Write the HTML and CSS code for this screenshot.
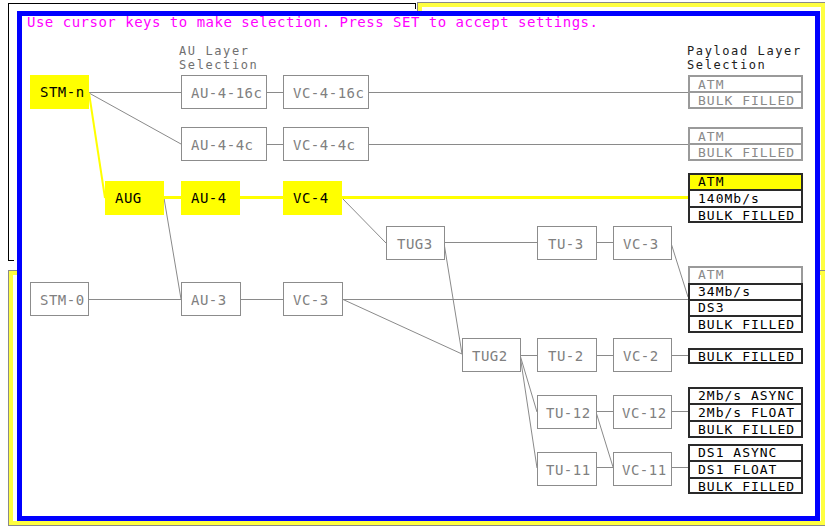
FILE: index.html
```html
<!DOCTYPE html>
<html lang="en">
<head>
<meta charset="utf-8">
<title>Payload Layer Selection</title>
<link rel="stylesheet" href="styles.css">
</head>
<body>
<div class="screen">
  <div class="bgwin bgwin-black"></div>
  <div class="bgwin bgwin-yellow-top"></div>
  <div class="bgwin bgwin-yellow-bottom"></div>

  <div class="dialog">
    <p class="hint">Use cursor keys to make selection. Press SET to accept settings.</p>

    <svg class="diagram" width="793" height="500" viewBox="22 16 793 500" xmlns="http://www.w3.org/2000/svg">
      <!-- column headings -->
      <text class="lbl lbl-au" x="179" y="55">AU Layer</text>
      <text class="lbl lbl-au" x="179" y="69">Selection</text>
      <text class="lbl lbl-pl" x="687" y="55">Payload Layer</text>
      <text class="lbl lbl-pl" x="687" y="69">Selection</text>

      <!-- gray connectors -->
      <g class="ln">
        <line x1="89" y1="92.5" x2="181" y2="92.5"/>
        <line x1="266" y1="92.5" x2="283" y2="92.5"/>
        <line x1="368" y1="92.5" x2="688" y2="92.5"/>
        <line x1="266" y1="144.5" x2="283" y2="144.5"/>
        <line x1="368" y1="144.5" x2="688" y2="144.5"/>
        <line x1="444" y1="242.5" x2="537" y2="242.5"/>
        <line x1="596" y1="242.5" x2="613" y2="242.5"/>
        <line x1="88" y1="299.5" x2="181" y2="299.5"/>
        <line x1="240" y1="299.5" x2="283" y2="299.5"/>
        <line x1="342" y1="299.5" x2="688" y2="299.5"/>
        <line x1="520" y1="355.5" x2="537" y2="355.5"/>
        <line x1="596" y1="355.5" x2="613" y2="355.5"/>
        <line x1="671" y1="355.5" x2="688" y2="355.5"/>
        <line x1="596" y1="411.5" x2="613" y2="411.5"/>
        <line x1="671" y1="411.5" x2="688" y2="411.5"/>
        <line x1="596" y1="467.5" x2="613" y2="467.5"/>
        <line x1="671" y1="467.5" x2="688" y2="467.5"/>

        <line x1="89" y1="93" x2="181" y2="144"/>
        <line x1="164" y1="198" x2="181" y2="299"/>
        <line x1="342" y1="198" x2="386" y2="243"/>
        <line x1="671" y1="243" x2="688" y2="297"/>
        <line x1="444" y1="243" x2="462" y2="354"/>
        <line x1="342" y1="299" x2="462" y2="354"/>
        <line x1="520" y1="355" x2="537" y2="412"/>
        <line x1="520" y1="355" x2="537" y2="468"/>
        <line x1="596" y1="412" x2="613" y2="467"/>
      </g>

      <!-- selected path -->
      <g class="ln-sel">
        <line class="ln-sel-diag" x1="89" y1="93" x2="105" y2="198"/>
        <line x1="164" y1="197.5" x2="181" y2="197.5"/>
        <line x1="240" y1="197.5" x2="283" y2="197.5"/>
        <line x1="342" y1="197.5" x2="688" y2="197.5"/>
      </g>

      <!-- selected nodes -->
      <g class="node sel"><rect x="30" y="75" width="59" height="34"/><text x="40" y="97">STM-n</text></g>
      <g class="node sel"><rect x="105" y="181" width="59" height="34"/><text x="115" y="203">AUG</text></g>
      <g class="node sel"><rect x="181" y="181" width="59" height="34"/><text x="191" y="203">AU-4</text></g>
      <g class="node sel"><rect x="283" y="181" width="59" height="34"/><text x="293" y="203">VC-4</text></g>

      <!-- unselected nodes -->
      <g class="node"><rect x="181.5" y="75.5" width="85" height="33"/><text x="191" y="98">AU-4-16c</text></g>
      <g class="node"><rect x="283.5" y="75.5" width="85" height="33"/><text x="293" y="98">VC-4-16c</text></g>
      <g class="node"><rect x="181.5" y="127.5" width="85" height="33"/><text x="191" y="150">AU-4-4c</text></g>
      <g class="node"><rect x="283.5" y="127.5" width="85" height="33"/><text x="293" y="150">VC-4-4c</text></g>
      <g class="node"><rect x="386.5" y="226.5" width="58" height="33"/><text x="397" y="249">TUG3</text></g>
      <g class="node"><rect x="537.5" y="226.5" width="59" height="33"/><text x="548" y="249">TU-3</text></g>
      <g class="node"><rect x="613.5" y="226.5" width="58" height="33"/><text x="623" y="249">VC-3</text></g>
      <g class="node"><rect x="30.5" y="282.5" width="58" height="33"/><text x="40" y="305">STM-0</text></g>
      <g class="node"><rect x="181.5" y="282.5" width="59" height="33"/><text x="191" y="305">AU-3</text></g>
      <g class="node"><rect x="283.5" y="282.5" width="59" height="33"/><text x="293" y="305">VC-3</text></g>
      <g class="node"><rect x="462.5" y="338.5" width="58" height="33"/><text x="472" y="361">TUG2</text></g>
      <g class="node"><rect x="537.5" y="338.5" width="59" height="33"/><text x="548" y="361">TU-2</text></g>
      <g class="node"><rect x="613.5" y="338.5" width="58" height="33"/><text x="623" y="361">VC-2</text></g>
      <g class="node"><rect x="537.5" y="395.5" width="59" height="33"/><text x="546" y="418">TU-12</text></g>
      <g class="node"><rect x="613.5" y="395.5" width="58" height="33"/><text x="622" y="418">VC-12</text></g>
      <g class="node"><rect x="537.5" y="452.5" width="59" height="33"/><text x="546" y="475">TU-11</text></g>
      <g class="node"><rect x="613.5" y="452.5" width="58" height="33"/><text x="622" y="475">VC-11</text></g>

      <!-- payload boxes -->
      <g class="pl off">
        <rect x="689" y="76" width="113" height="32"/>
        <line x1="688" y1="92" x2="803" y2="92"/>
        <text x="698" y="89">ATM</text>
        <text x="698" y="105">BULK FILLED</text>
      </g>
      <g class="pl off">
        <rect x="689" y="128" width="113" height="32"/>
        <line x1="688" y1="144" x2="803" y2="144"/>
        <text x="698" y="141">ATM</text>
        <text x="698" y="157">BULK FILLED</text>
      </g>
      <g class="pl on">
        <rect class="hl" x="689" y="174" width="113" height="16"/>
        <rect x="689" y="174" width="113" height="48"/>
        <line x1="688" y1="190" x2="803" y2="190"/>
        <line x1="688" y1="207" x2="803" y2="207"/>
        <text x="698" y="186">ATM</text>
        <text x="698" y="203">140Mb/s</text>
        <text x="698" y="220">BULK FILLED</text>
      </g>
      <g class="pl off">
        <rect x="689" y="267" width="113" height="17"/>
        <text x="698" y="279">ATM</text>
      </g>
      <g class="pl on">
        <rect x="689" y="284" width="113" height="48"/>
        <line x1="688" y1="300" x2="803" y2="300"/>
        <line x1="688" y1="316" x2="803" y2="316"/>
        <text x="698" y="296">34Mb/s</text>
        <text x="698" y="312">DS3</text>
        <text x="698" y="329">BULK FILLED</text>
      </g>
      <g class="pl on">
        <rect x="689" y="349" width="113" height="14"/>
        <text x="698" y="361">BULK FILLED</text>
      </g>
      <g class="pl on">
        <rect x="689" y="388" width="113" height="49"/>
        <line x1="688" y1="404" x2="803" y2="404"/>
        <line x1="688" y1="421" x2="803" y2="421"/>
        <text x="698" y="400">2Mb/s ASYNC</text>
        <text x="698" y="417">2Mb/s FLOAT</text>
        <text x="698" y="434">BULK FILLED</text>
      </g>
      <g class="pl on">
        <rect x="689" y="445" width="113" height="48"/>
        <line x1="688" y1="461" x2="803" y2="461"/>
        <line x1="688" y1="478" x2="803" y2="478"/>
        <text x="698" y="457">DS1 ASYNC</text>
        <text x="698" y="474">DS1 FLOAT</text>
        <text x="698" y="491">BULK FILLED</text>
      </g>
    </svg>
  </div>
</div>
</body>
</html>
```

FILE: styles.css
```css
html, body {
  margin: 0;
  padding: 0;
  background: #ffffff;
}

body {
  width: 825px;
  height: 526px;
  overflow: hidden;
  font-family: "DejaVu Sans Mono", "Liberation Mono", monospace;
}

.screen {
  position: relative;
  width: 825px;
  height: 526px;
  overflow: hidden;
  background: #ffffff;
}

/* windows lying behind the dialog */
.bgwin {
  position: absolute;
  box-sizing: border-box;
}

.bgwin-black {
  left: 8px;
  top: 3px;
  width: 408px;
  height: 258px;
  border-top: 1px solid #000000;
  border-left: 1px solid #000000;
}

.bgwin-black::after {
  content: "";
  position: absolute;
  right: 0;
  top: 0;
  width: 1px;
  height: 5px;
  background: #000000;
}

.bgwin-black::before {
  content: "";
  position: absolute;
  left: 0;
  bottom: 0;
  width: 5px;
  height: 1px;
  background: #000000;
}

.bgwin-yellow-top {
  left: 417px;
  top: 2px;
  width: 409px;
  height: 530px;
  border: 1px solid #8a8a8a;
  box-shadow: inset 0 0 0 4px #ffff40;
}

.bgwin-yellow-bottom {
  left: 8px;
  top: 270px;
  width: 830px;
  height: 256px;
  border: 1px solid #8a8a8a;
  box-shadow: inset 0 0 0 4px #ffff40;
}

/* the active dialog */
.dialog {
  position: absolute;
  left: 17px;
  top: 11px;
  width: 793px;
  height: 500px;
  border: 5px solid #0000ff;
  background: #ffffff;
}

.hint {
  position: relative;
  z-index: 1;
  margin: -1px 0 0 0;
  padding: 0 0 0 5px;
  font-size: 14px;
  line-height: 14px;
  letter-spacing: 0.5px;
  color: #ff00ff;
  white-space: nowrap;
}

.diagram {
  position: absolute;
  left: 0;
  top: 0;
  display: block;
}

.diagram text {
  font-family: "DejaVu Sans Mono", "Liberation Mono", monospace;
}

.lbl {
  font-size: 12px;
  letter-spacing: 1.6px;
}

.lbl-au {
  fill: #707070;
}

.lbl-pl {
  fill: #202020;
}

.ln line {
  stroke: #8a8a8a;
  stroke-width: 1;
}

.ln-sel line {
  stroke: #ffff00;
  stroke-width: 3;
}

.ln-sel .ln-sel-diag {
  stroke-width: 2;
}

.node rect {
  fill: #ffffff;
  stroke: #8c8c8c;
  stroke-width: 1;
}

.node text {
  font-size: 14px;
  letter-spacing: 0.5px;
  fill: #808080;
}

.node.sel rect {
  fill: #ffff00;
  stroke: none;
}

.node.sel text {
  fill: #000000;
}

.pl rect,
.pl line {
  fill: none;
  stroke-width: 2;
}

.pl text {
  font-size: 13px;
  letter-spacing: 1px;
}

.pl.off rect,
.pl.off line {
  stroke: #9a9a9a;
}

.pl.off text {
  fill: #8a8a8a;
}

.pl.on rect,
.pl.on line {
  stroke: #2a2a2a;
}

.pl.on text {
  fill: #000000;
}

.pl.on rect.hl {
  fill: #ffff00;
  stroke: none;
}
```
